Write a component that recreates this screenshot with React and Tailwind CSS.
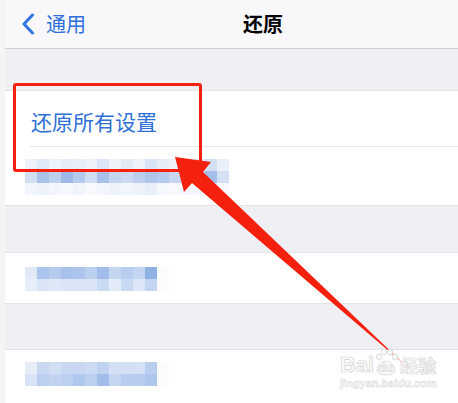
import React from 'react';

const row2 = [
  ['#edf2fa', '#dfe8f6', '#eef3fb', '#e6edf8', '#e8eef8', '#edf2fa', '#dce6f6', '#eef3fb', '#e3ebf7', '#eef3fb', '#d9e4f5', '#e6edf8', '#eef3fb', '#f0f4fb', '#dde7f6', '#d3e0f4', '#eaf0fa'],
  ['#d3e0f4', '#a9c2ea', '#bcd0f0', '#9cb9e7', '#b3caee', '#d0ddf3', '#a8c1ea', '#c3d5f1', '#cbdaf2', '#bccff0', '#aec6ec', '#b6cbee', '#c7d7f1', '#c2d4f1', '#bfd2f0', '#a4bfe9', '#d5e1f4'],
  ['#f1f5fc', '#eef3fb', '#f3f6fc', '#f5f8fd', '#f0f4fb', '#f7f9fd', '#f3f6fc', '#eef3fb', '#f1f5fc', '#eef3fb', '#e9eff9', '#f5f8fd', '#f7f9fd', '#f3f6fc', '#f5f8fd', '#f1f5fc', '#f7f9fd'],
];

const row3 = [
  ['#e0e9f7', '#aac4ec', '#b5cbee', '#a9c2eb', '#adc5ec', '#bcd0f0', '#a2bde9', '#c5d6f1', '#b8cdef', '#c4d5f1', '#8fb1e4', '#fafcfe'],
  ['#e8eef9', '#d9e4f6', '#dde7f6', '#dbe5f6', '#dbe5f6', '#dbe5f6', '#cbdaf3', '#e3ebf8', '#cad9f3', '#dce6f6', '#c4d5f1', '#fafcfe'],
];

const row4 = [
  ['#e8eef9', '#c9d8f2', '#d1def4', '#c8d7f2', '#c8d7f2', '#ccdaf3', '#bfd2f0', '#d4e0f5', '#d3dff4', '#d5e1f6', '#b9cdef', '#fafcfe'],
  ['#d8e3f5', '#bccff0', '#c1d3f0', '#bccff0', '#b0c8ed', '#bccff0', '#a2bde9', '#c5d6f1', '#b7ccee', '#b7ccee', '#aec6ec', '#fafcfe'],
];

// blurred (mosaic) label
function Mosaic({ rows }) {
  return (
    <div className="flex flex-col">
      {rows.map((r, i) => (
        <div key={i} className="flex">
          {r.map((c, j) => (
            <div key={j} className="w-[12px] h-[12px]" style={{ backgroundColor: c }} />
          ))}
        </div>
      ))}
    </div>
  );
}

function App() {
  return (
    <div className="relative w-[458px] h-[403px] overflow-hidden bg-white flex font-['Noto_Sans_CJK_SC','Noto_Sans',sans-serif]">
      <div className="w-[5px] shrink-0 bg-[#f4f4f5]" />

      <div className="flex-1 flex flex-col">
        {/* Nav bar */}
        <header className="h-[49px] shrink-0 bg-[#f8f8fa] border-b border-[#cfcfd4] flex items-center pl-[16px]">
          <svg width="14" height="22" viewBox="0 0 14 22" className="shrink-0">
            <path d="M11.5 2 L3 11 L11.5 20" fill="none" stroke="#2f74e6" strokeWidth="3" strokeLinecap="round" strokeLinejoin="round" />
          </svg>
          <span className="ml-[11px] text-[20px] leading-[24px] text-[#2f6fdc]">通用</span>
          <span className="ml-[157px] text-[20px] leading-[24px] font-semibold text-black">还原</span>
        </header>

        <div className="h-[42px] shrink-0 bg-[#efeff4] border-b border-[#e3e3e8]" />

        {/* Reset all settings */}
        <div className="h-[55px] shrink-0 bg-white pl-[26px] pt-[19px]">
          <span className="text-[21px] leading-[22px] text-[#2e6fd8]">还原所有设置</span>
        </div>
        <div className="ml-[25px] border-t border-[#e6e6ea]" />
        <div className="h-[58px] shrink-0 bg-white pl-[20px] pt-[12px]">
          <Mosaic rows={row2} />
        </div>

        <div className="h-[48px] shrink-0 bg-[#efeff4] border-t border-[#e3e3e8] border-b" />

        <div className="h-[50px] shrink-0 bg-white pl-[20px] pt-[14px]">
          <Mosaic rows={row3} />
        </div>

        <div className="h-[47px] shrink-0 bg-[#efeff4] border-t border-[#e3e3e8] border-b" />

        <div className="flex-1 bg-white pl-[20px] pt-[12px]">
          <Mosaic rows={row4} />
        </div>
      </div>

      {/* highlight box */}
      <div className="absolute left-[13px] top-[83px] w-[189px] h-[89px] border-[3px] border-[#f6200f] rounded-[3px]" />

      {/* arrow */}
      <svg className="absolute left-0 top-0" width="458" height="403" viewBox="0 0 458 403">
        <polygon points="175,157 211,162 203,172 404,364 192,183 184,192" fill="#f6200f" />
      </svg>

      {/* watermark */}
      <div className="absolute left-[340px] top-[348px] flex flex-col items-start">
        <div className="flex items-end">
          <span className="font-['Liberation_Sans',sans-serif] font-bold text-[22px] leading-[22px] text-[#fbfbfb] [-webkit-text-stroke:0.7px_#d2d2d2]">Bai</span>
          <div className="relative w-[24px] h-[28px]">
            <svg className="absolute left-0 top-0" width="24" height="28" viewBox="0 0 24 28">
              <g fill="#fbfbfb" stroke="#d2d2d2" strokeWidth="0.8">
                <ellipse cx="5" cy="9" rx="2.5" ry="3" />
                <ellipse cx="10" cy="4" rx="2.5" ry="3" />
                <ellipse cx="16" cy="4" rx="2.5" ry="3" />
                <ellipse cx="21" cy="9" rx="2.5" ry="3" />
                <path d="M3 22 Q4 14 12 13 Q20 14 21 22 Q20 27 12 27 Q4 27 3 22 Z" />
              </g>
            </svg>
            <span className="absolute left-[4px] top-[14px] font-['Liberation_Sans',sans-serif] font-bold text-[12px] leading-[12px] text-[#fbfbfb] [-webkit-text-stroke:0.6px_#d2d2d2]">du</span>
          </div>
          <span className="ml-[2px] font-bold text-[18px] leading-[22px] text-[#fbfbfb] [-webkit-text-stroke:0.6px_#d2d2d2]">经验</span>
        </div>
        <span className="mt-[1px] font-['Liberation_Sans',sans-serif] font-bold text-[11px] leading-[12px] text-[#fbfbfb] [-webkit-text-stroke:0.5px_#d8d8d8]">jingyan.baidu.com</span>
      </div>
    </div>
  );
}

export default App;
